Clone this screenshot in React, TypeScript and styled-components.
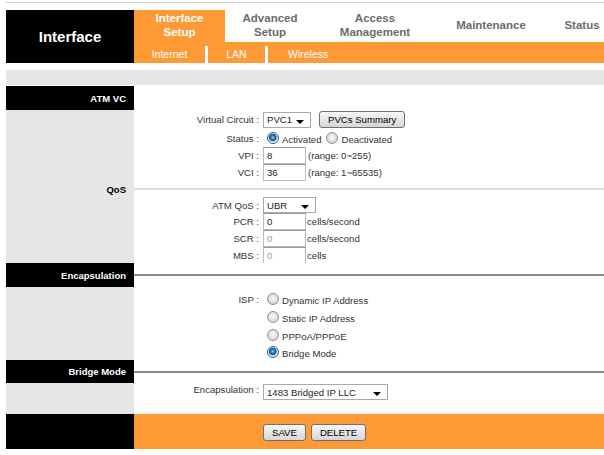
import styled, { createGlobalStyle } from "styled-components";

const ORANGE = "#fd9a36";

const GlobalStyle = createGlobalStyle`
    html, body{
        margin: 0;
        padding: 0;
        background: #fff;
        overflow: hidden;
    }
    body{
        font-family: "Liberation Sans", Arial, sans-serif;
    }
`;

const Page = styled.div`
    width: 598px;
    padding: 2px 0 0 6px;
    overflow: hidden;
`;
const TopRule = styled.div`
    height: 1px;
    background: #d2d2d2;
    margin-bottom: 7px;
`;
const Header = styled.div`
    display: flex;
    height: 53px;
`;
const Brand = styled.div`
    width: 128px;
    flex-shrink: 0;
    background: #000;
    color: #fff;
    font-weight: bold;
    font-size: 15px;
    display: flex;
    align-items: center;
    justify-content: center;
`;
const Nav = styled.div`
    flex: 1;
    min-width: 0;
    display: flex;
    flex-direction: column;
    overflow: hidden;
`;
const Tabs = styled.div`
    display: flex;
    height: 32px;
`;
const Tab = styled.div<{ $active?: boolean; $w: number }>`
    width: ${p => p.$w}px;
    flex-shrink: 0;
    display: flex;
    align-items: center;
    justify-content: center;
    text-align: center;
    font-weight: bold;
    font-size: 11.5px;
    line-height: 14px;
    padding-bottom: 2px;
    box-sizing: border-box;
    white-space: pre-line;
    color: ${p => (p.$active ? "#fff" : "#6b6b6b")};
    background: ${p => (p.$active ? ORANGE : "#fff")};
`;
const SubNav = styled.div`
    height: 21px;
    background: ${ORANGE};
    display: flex;
`;
const SubItem = styled.div<{ $w?: number }>`
    ${p => (p.$w ? `width: ${p.$w}px;` : "padding: 0 20px;")}
    display: flex;
    align-items: center;
    justify-content: center;
    padding-top: 3px;
    box-sizing: border-box;
    color: #fff;
    font-size: 10.5px;
`;
const SubSep = styled.div`
    width: 3px;
    height: 17px;
    align-self: flex-end;
    background: #fff;
`;
const GreyBar = styled.div`
    height: 15px;
    margin: 7px 0 1px;
    background: #e6e6e6;
`;

const Row = styled.div<{ $h: number }>`
    display: flex;
    height: ${p => p.$h}px;
`;
const Side = styled.div<{ $dark?: boolean }>`
    width: 128px;
    flex-shrink: 0;
    box-sizing: border-box;
    padding-right: 8px;
    background: ${p => (p.$dark ? "#000" : "#e6e6e6")};
    color: ${p => (p.$dark ? "#fff" : "#000")};
    font-weight: bold;
    font-size: 9.5px;
    display: flex;
    align-items: center;
    justify-content: flex-end;
`;
const Main = styled.div<{ $pt?: number; $top?: boolean; $bg?: string }>`
    flex: 1;
    display: flex;
    align-items: ${p => (p.$top ? "flex-start" : "center")};
    padding-top: ${p => p.$pt ?? 0}px;
    background: ${p => p.$bg ?? "#fff"};
    box-sizing: border-box;
`;
const Rule = styled.div<{ $light?: boolean }>`
    flex: 1;
    height: 2px;
    background: ${p => (p.$light ? "#dcdcdc" : "#8c8c8c")};
`;
const FieldLabel = styled.div`
    width: 129px;
    flex-shrink: 0;
    box-sizing: border-box;
    padding-right: 4px;
    text-align: right;
    font-size: 9.6px;
    color: #333;
`;
const Value = styled.div<{ $gap?: number }>`
    display: flex;
    align-items: center;
    gap: ${p => p.$gap ?? 2}px;
    font-size: 9.6px;
    color: #333;
`;
const SelectWrap = styled.div<{ $w: number }>`
    position: relative;
    width: ${p => p.$w}px;
    height: 16px;
    box-sizing: border-box;
    border: 1px solid #a9a9a9;
    background: #fff;
    select{
        appearance: none;
        border: none;
        outline: none;
        background: transparent;
        width: 100%;
        height: 100%;
        padding: 0 0 0 3px;
        margin: 0;
        font-family: inherit;
        font-weight: normal;
        font-size: 9.6px;
        color: #222;
    }
`;
const Arrow = styled.span`
    position: absolute;
    right: 6px;
    top: 7px;
    width: 0;
    height: 0;
    border-left: 4px solid transparent;
    border-right: 4px solid transparent;
    border-top: 4px solid #000;
    pointer-events: none;
`;
const TextBox = styled.input`
    width: 43px;
    height: 17px;
    box-sizing: border-box;
    margin: 0;
    padding: 0 3px;
    border: 1px solid #b9bbc0;
    border-top-color: #999ba0;
    font-family: inherit;
    font-size: 9.6px;
    color: #222;
    background: #fff;
    &:disabled{
        color: #9a9a9a;
        background: #fff;
    }
`;
const Radio = styled.input.attrs({ type: "radio" })`
    appearance: none;
    width: 12px;
    height: 12px;
    margin: 0 3px 0 4px;
    border-radius: 50%;
    border: 1px solid #939393;
    box-sizing: border-box;
    background: radial-gradient(circle at 50% 45%, #fbfbfb 0, #e6e6e6 3px, #cdcdcd 6px);
    &:checked{
        border-color: #2c5f88;
        background: radial-gradient(circle at 48% 45%, #9bdcff 0, #2f8bd0 1.5px, #145287 3.4px, #e4e4e4 4.2px, #f6f6f6 6px);
    }
`;
const RadioText = styled.span`
    padding-top: 3px;
    margin-right: 1px;
    font-size: 9.6px;
    color: #333;
`;
const Btn = styled.button`
    height: 17px;
    padding: 0 8px;
    margin: 0;
    box-sizing: border-box;
    border: 1px solid #707070;
    border-radius: 3px;
    background: linear-gradient(#f7f7f7, #e6e6e6 50%, #d6d6d6);
    font-family: inherit;
    font-size: 9.6px;
    color: #000;
`;
const Buttons = styled.div`
    display: flex;
    gap: 5px;
    padding-left: 129px;
    padding-top: 1px;
`;

function Dropdown({ w, value }: { w: number; value: string }) {
    return (
        <SelectWrap $w={w}>
            <select defaultValue={value}>
                <option>{value}</option>
            </select>
            <Arrow />
        </SelectWrap>
    );
}

function Section({ label, dark, rule, h }: { label: string; dark?: boolean; rule?: "light" | "dark"; h: number }) {
    return (
        <Row $h={h}>
            <Side $dark={dark}>{label}</Side>
            <Main>{rule && <Rule $light={rule === "light"} />}</Main>
        </Row>
    );
}

function Field({ label, h, pt, top, children }: { label?: string; h: number; pt?: number; top?: boolean; children: React.ReactNode }) {
    return (
        <Row $h={h}>
            <Side />
            <Main $pt={pt} $top={top}>
                <FieldLabel>{label ? `${label} :` : ""}</FieldLabel>
                {children}
            </Main>
        </Row>
    );
}

const tabs = [
    { label: "Interface\nSetup", w: 91, active: true },
    { label: "Advanced\nSetup", w: 90 },
    { label: "Access\nManagement", w: 120 },
    { label: "Maintenance", w: 112 },
    { label: "Status", w: 70 },
];

const ispOptions = ["Dynamic IP Address", "Static IP Address", "PPPoA/PPPoE", "Bridge Mode"];

export default function App() {
    return (
        <Page>
            <GlobalStyle />
            <TopRule />
            <Header>
                <Brand>Interface</Brand>
                <Nav>
                    <Tabs>
                        {tabs.map(t => (
                            <Tab key={t.label} $w={t.w} $active={t.active}>
                                {t.label}
                            </Tab>
                        ))}
                    </Tabs>
                    <SubNav>
                        <SubItem $w={71}>Internet</SubItem>
                        <SubSep />
                        <SubItem $w={57}>LAN</SubItem>
                        <SubSep />
                        <SubItem>Wireless</SubItem>
                    </SubNav>
                </Nav>
            </Header>
            <GreyBar />

            <Section label="ATM VC" dark h={24} />
            <Field label="Virtual Circuit" h={19}>
                <Value $gap={8}>
                    <Dropdown w={48} value="PVC1" />
                    <Btn>PVCs Summary</Btn>
                </Value>
            </Field>
            <Field label="Status" h={18}>
                <Value $gap={0}>
                    <Radio name="status" defaultChecked />
                    <RadioText>Activated</RadioText>
                    <Radio name="status" />
                    <RadioText>Deactivated</RadioText>
                </Value>
            </Field>
            <Field label="VPI" h={17}>
                <Value>
                    <TextBox defaultValue="8" />
                    <span>(range: 0~255)</span>
                </Value>
            </Field>
            <Field label="VCI" h={17}>
                <Value>
                    <TextBox defaultValue="36" />
                    <span>(range: 1~65535)</span>
                </Value>
            </Field>

            <Section label="QoS" rule="light" h={16} />
            <Field label="ATM QoS" h={16}>
                <Value>
                    <Dropdown w={53} value="UBR" />
                </Value>
            </Field>
            <Field label="PCR" h={17}>
                <Value $gap={1}>
                    <TextBox defaultValue="0" />
                    <span>cells/second</span>
                </Value>
            </Field>
            <Field label="SCR" h={17}>
                <Value $gap={1}>
                    <TextBox defaultValue="0" disabled />
                    <span>cells/second</span>
                </Value>
            </Field>
            <Field label="MBS" h={16}>
                <Value $gap={1}>
                    <TextBox defaultValue="0" disabled />
                    <span>cells</span>
                </Value>
            </Field>

            <Section label="Encapsulation" dark rule="dark" h={24} />
            {ispOptions.map((opt, i) => (
                <Field key={opt} label={i === 0 ? "ISP" : undefined} h={i === 0 ? 21 : i === 3 ? 16 : 18} pt={i === 0 ? 3 : 0}>
                    <Value $gap={0}>
                        <Radio name="isp" defaultChecked={opt === "Bridge Mode"} />
                        <RadioText>{opt}</RadioText>
                    </Value>
                </Field>
            ))}

            <Section label="Bridge Mode" dark rule="dark" h={23} />
            <Field label="Encapsulation" h={31} pt={1} top>
                <Value>
                    <Dropdown w={125} value="1483 Bridged IP LLC" />
                </Value>
            </Field>

            <Row $h={35}>
                <Side $dark />
                <Main $bg={ORANGE}>
                    <Buttons>
                        <Btn>SAVE</Btn>
                        <Btn>DELETE</Btn>
                    </Buttons>
                </Main>
            </Row>
        </Page>
    );
}
